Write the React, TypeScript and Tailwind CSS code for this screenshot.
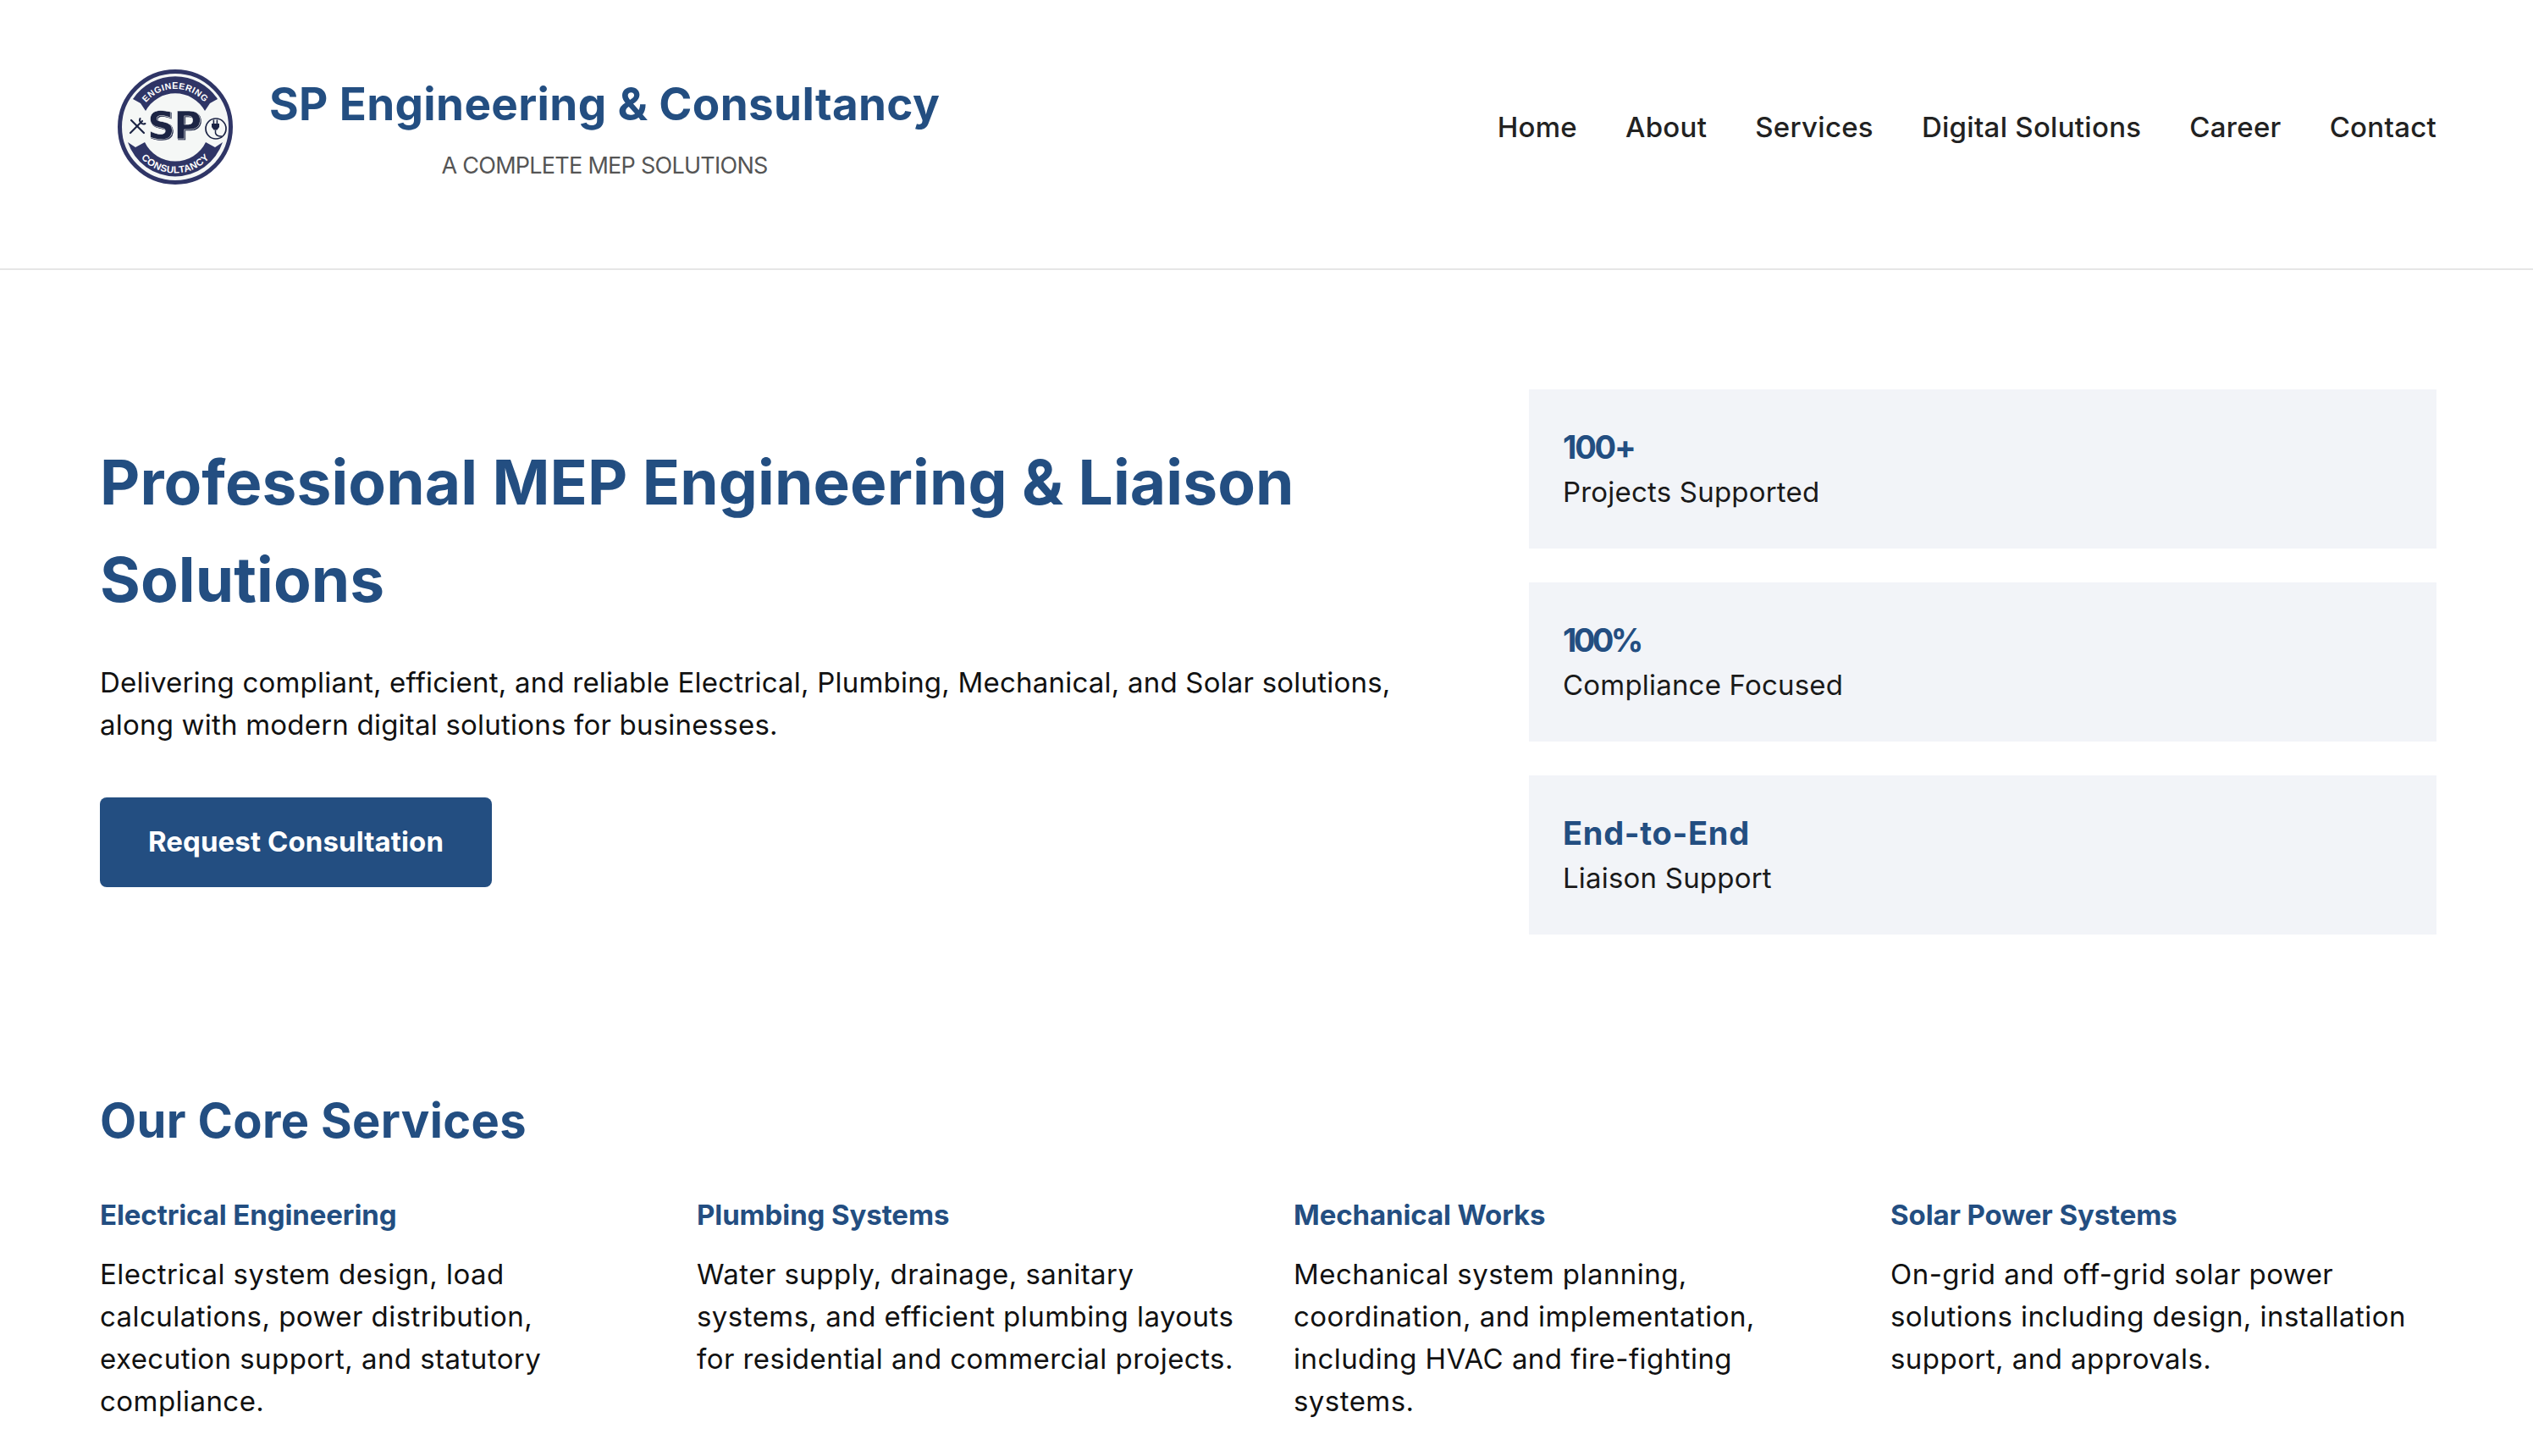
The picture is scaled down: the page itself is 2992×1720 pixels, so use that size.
const services = [
  {
    title: "Electrical Engineering",
    lines: ["Electrical system design, load", "calculations, power distribution,", "execution support, and statutory", "compliance."],
  },
  {
    title: "Plumbing Systems",
    lines: ["Water supply, drainage, sanitary", "systems, and efficient plumbing layouts", "for residential and commercial projects."],
  },
  {
    title: "Mechanical Works",
    lines: ["Mechanical system planning,", "coordination, and implementation,", "including HVAC and fire-fighting", "systems."],
  },
  {
    title: "Solar Power Systems",
    lines: ["On-grid and off-grid solar power", "solutions including design, installation", "support, and approvals."],
  },
];

const stats = [
  { value: "100+", label: "Projects Supported", track: "tracking-[-2.2px]" },
  { value: "100%", label: "Compliance Focused", track: "tracking-[-3.6px]" },
  { value: "End-to-End", label: "Liaison Support", track: "tracking-[0.7px]" },
];

const navItems = ["Home", "About", "Services", "Digital Solutions", "Career", "Contact"];

function Logo() {
  const navy = "#2f3566";
  const dark = "#1c2444";
  return (
    <svg viewBox="0 0 140 140" className="w-[140px] h-[140px] shrink-0">
      <circle cx="70" cy="70" r="66" fill="#f5f7f6" />
      <circle cx="70" cy="70" r="65.5" fill="none" stroke={navy} strokeWidth="5" />
      {/* ribbons */}
      <path d="M 20 37 L 29 42 L 35 51 A 40 40 0 0 1 105 51 L 111 42 L 120 37 A 60 60 0 0 0 20 37 Z" fill={navy} />
      <path d="M 14 88 L 23 94 L 34 88 A 40 40 0 0 0 106 88 L 117 94 L 126 88 A 59 59 0 0 1 14 88 Z" fill={navy} />
      <path id="logo-top" d="M 25 70 A 45 45 0 0 1 115 70" fill="none" />
      <path id="logo-bottom" d="M 15.5 70 A 54.5 54.5 0 0 0 124.5 70" fill="none" />
      <text fill="#ffffff" fontSize="10.5" letterSpacing="0.5" className="font-['Liberation_Sans',sans-serif] font-bold">
        <textPath href="#logo-top" startOffset="50%" textAnchor="middle">ENGINEERING</textPath>
      </text>
      <text fill="#ffffff" fontSize="11.5" letterSpacing="0.4" className="font-['Liberation_Sans',sans-serif] font-bold">
        <textPath href="#logo-bottom" startOffset="50%" textAnchor="middle">CONSULTANCY</textPath>
      </text>
      {/* SP with the offset edge */}
      <text x="68.5" y="84" textAnchor="middle" fill={dark} stroke="#f5f7f6" strokeWidth="0.5" fontSize="45" letterSpacing="-1.5" className="font-['DejaVu_Sans',sans-serif] font-bold drop-shadow-[1px_1.5px_0_#1c2444]">SP</text>
      {/* crossed tools */}
      <g stroke={dark} strokeWidth="2.2" strokeLinecap="round" fill="none">
        <path d="M 17 77 L 31 63" />
        <path d="M 18 62 L 33 77" />
        <path d="M 28.5 60 A 4.5 4.5 0 0 0 34.5 66" strokeWidth="2" />
      </g>
      {/* plug in a ring */}
      <circle cx="118" cy="72" r="12" fill="none" stroke={dark} strokeWidth="1.7" />
      <g fill={dark}>
        <rect x="114.6" y="61.5" width="1.6" height="5" />
        <rect x="118.6" y="61.5" width="1.6" height="5" />
        <path d="M 113 66 H 122 V 70 L 119.5 73.5 H 115.5 L 113 70 Z" />
      </g>
      <path d="M 117.5 73.5 V 77 Q 118.5 81.5 125 81" fill="none" stroke={dark} strokeWidth="1.5" />
    </svg>
  );
}

export default function App() {
  return (
    <div className="min-h-[1720px] bg-white font-['Inter',sans-serif] text-[#111111]">
      <header className="flex items-center justify-between h-[319px] border-b-2 border-[#e6e6e6] pl-[137px] pr-[114px] pb-[18px]">
        <div className="flex items-center gap-[41px]">
          <Logo />
          <div className="flex flex-col items-center">
            <div className="text-[53px] leading-[78px] font-bold text-[#234e81] tracking-[0.35px]">SP Engineering &amp; Consultancy</div>
            <div className="text-[27px] leading-[40px] mt-[14px] text-[#555555] tracking-[-0.73px]">A COMPLETE MEP SOLUTIONS</div>
          </div>
        </div>
        <nav className="flex items-center gap-[57px]">
          {navItems.map((item) => (
            <span key={item} className="text-[33px] leading-[50px] font-medium text-[#222222] tracking-[0.28px]">{item}</span>
          ))}
        </nav>
      </header>

      <main className="pl-[118px] pr-[114px]">
        <section className="grid grid-cols-[1608px_1072px] gap-[80px] pt-[141px] items-center">
          <div className="pb-[4px]">
            <h1 className="text-[73px] leading-[115px] font-bold text-[#234e81] tracking-[0.1px]">Professional MEP Engineering &amp; Liaison Solutions</h1>
            <p className="mt-[39px] text-[33px] leading-[50px] tracking-[0.21px]">
              Delivering compliant, efficient, and reliable Electrical, Plumbing, Mechanical, and Solar solutions,
              <br />
              along with modern digital solutions for businesses.
            </p>
            <button className="mt-[61px] w-[463px] h-[106px] rounded-lg bg-[#234e81] text-white text-[33px] font-bold tracking-[0.1px]">Request Consultation</button>
          </div>
          <div className="flex flex-col gap-[40px]">
            {stats.map((s) => (
              <div key={s.value} className="h-[188px] bg-[#f2f4f8] px-[40px] flex flex-col justify-center">
                <div className={`text-[38px] leading-[56px] font-bold text-[#234e81] -mt-[2px] ${s.track}`}>{s.value}</div>
                <div className="text-[33px] leading-[50px] text-[#1a1a1a] tracking-[0.2px]">{s.label}</div>
              </div>
            ))}
          </div>
        </section>

        <section className="mt-[178px]">
          <h2 className="text-[56px] leading-[84px] font-bold text-[#234e81] tracking-[0.35px]">Our Core Services</h2>
          <div className="grid grid-cols-4 gap-[60px] mt-[44px]">
            {services.map((s) => (
              <div key={s.title}>
                <h3 className="text-[33px] leading-[50px] font-bold text-[#234e81] tracking-[-0.1px]">{s.title}</h3>
                <p className="mt-[20px] text-[33px] leading-[50px] tracking-[0.45px]">
                  {s.lines.map((l) => (
                    <span key={l} className="block whitespace-nowrap">{l}</span>
                  ))}
                </p>
              </div>
            ))}
          </div>
        </section>
      </main>
    </div>
  );
}
